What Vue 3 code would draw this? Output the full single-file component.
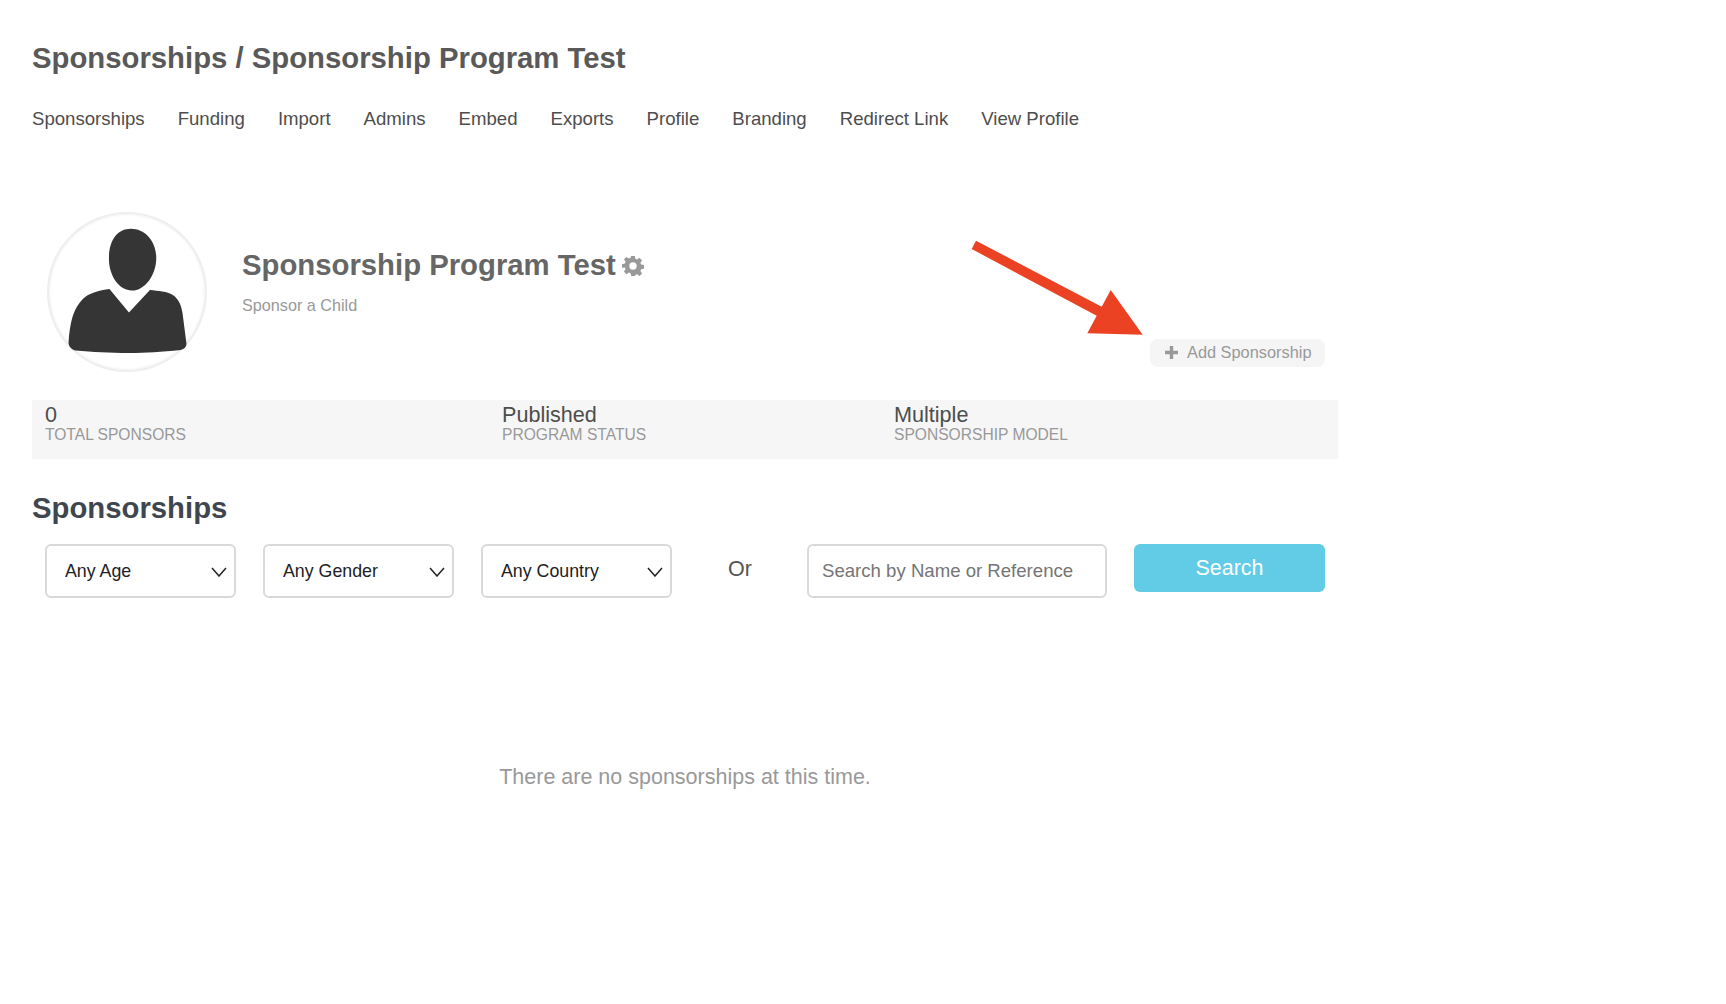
<script setup>
const tabs = ['Sponsorships', 'Funding', 'Import', 'Admins', 'Embed', 'Exports', 'Profile', 'Branding', 'Redirect Link', 'View Profile']

const stats = [
  { value: '0', label: 'TOTAL SPONSORS' },
  { value: 'Published', label: 'PROGRAM STATUS' },
  { value: 'Multiple', label: 'SPONSORSHIP MODEL' }
]

const filters = ['Any Age', 'Any Gender', 'Any Country']
</script>

<template>
  <main class="page">
    <h1 class="crumb">Sponsorships / Sponsorship Program Test</h1>

    <nav class="tabs">
      <a v-for="tab in tabs" :key="tab" href="#">{{ tab }}</a>
    </nav>

    <section class="profile">
      <div class="avatar">
        <svg viewBox="0 0 160 160" width="156" height="156">
          <path
            d="M84 15 C98 15 110 27 110 45 C110 63 98 78.500 85 78.500 C72 78.500 61 63 61.500 45 C61.500 27 70 15 84 15 Z"
            fill="#353535"
          />
          <path
            d="M62 77 L82 101 L103.500 78 C112 79 121 79.500 127 83 C133 87 136 94 137 102 L141 133 C141 136 139 138.500 135 139.500 C115 141.500 100 142.500 82 142.500 C62 142.500 45 141.500 27 140 C23 139 20.500 136 20 132.500 C20.500 122 22 113 24 106 C27 96 33 87 40 83 C47 79.500 55 78 62 77 Z"
            fill="#353535"
          />
        </svg>
      </div>

      <div class="profile-text">
        <h2>
          Sponsorship Program Test
          <svg class="gear" viewBox="0 0 24 24" width="22" height="22">
            <path
              fill="#999"
              fill-rule="evenodd"
              d="M10 1h4l.6 3.100 1.900.8 2.600-1.800 2.800 2.800-1.800 2.600.8 1.900 3.100.6v4l-3.100.6-.8 1.900 1.800 2.600-2.800 2.800-2.600-1.800-1.900.8L14 23h-4l-.6-3.100-1.900-.8-2.600 1.800-2.800-2.800 1.800-2.600-.8-1.900L0 14v-4l3.100-.6.8-1.900-1.800-2.600 2.800-2.800 2.600 1.800 1.900-.8L10 1Zm2 7a4 4 0 1 0 0 8 4 4 0 0 0 0-8Z"
            />
          </svg>
        </h2>
        <p>Sponsor a Child</p>
      </div>

      <button class="add-btn" type="button">
        <svg viewBox="0 0 13 13" width="13" height="13">
          <path d="M4.800 0h3.400v4.800H13v3.400H8.200V13H4.800V8.200H0V4.800h4.800Z" fill="#999" />
        </svg>
        <span>Add Sponsorship</span>
      </button>
    </section>

    <section class="stats">
      <div v-for="stat in stats" :key="stat.label">
        <div class="stat-value">{{ stat.value }}</div>
        <div class="stat-label">{{ stat.label }}</div>
      </div>
    </section>

    <h2 class="list-title">Sponsorships</h2>

    <form class="filters" @submit.prevent>
      <div v-for="filter in filters" :key="filter" class="select-wrap">
        <select>
          <option>{{ filter }}</option>
        </select>
        <svg class="chevron" viewBox="0 0 16 10" width="16" height="10">
          <path d="M1 1l7 8 7-8" fill="none" stroke="#222" stroke-width="1.500" />
        </svg>
      </div>
      <span class="or">Or</span>
      <input type="text" placeholder="Search by Name or Reference" />
      <button class="search-btn" type="submit">Search</button>
    </form>

    <p class="empty">There are no sponsorships at this time.</p>

    <svg class="arrow" viewBox="0 0 180 100" width="180" height="100">
      <path d="M11 5.700 L6.700 14 L131.700 80.700 L122.300 98.300 L177.700 99.700 L145.700 55 L136.700 71.700 Z" fill="#ec4224" />
    </svg>
  </main>
</template>

<style>
body {
  background: #fff;
}
</style>

<style scoped>
.page {
  position: relative;
  width: 1306px;
  margin-left: 32px;
  padding-top: 40px;
  height: 964px;
  font-family: "Liberation Sans", Arial, sans-serif;
}

.crumb {
  margin: 0;
  font-size: 29.300px;
  line-height: 36px;
  font-weight: 700;
  color: #595959;
}

.tabs {
  display: flex;
  gap: 33px;
  margin-top: 31px;
  height: 23px;
}

.tabs a {
  font-size: 18.600px;
  line-height: 24px;
  color: #4d4d4d;
  text-decoration: none;
}

.profile {
  display: flex;
  margin-top: 82px;
  padding-left: 15px;
  padding-right: 13px;
  height: 160px;
}

.avatar {
  width: 160px;
  height: 160px;
  box-sizing: border-box;
  border: 2px solid #eee;
  border-radius: 50%;
  box-shadow: inset 0 0 3px #e6e6e6;
  flex: none;
}

.avatar svg {
  display: block;
}

.profile-text {
  margin-left: 35px;
  padding-top: 35px;
}

.profile-text h2 {
  display: flex;
  align-items: center;
  gap: 6px;
  margin: 0;
  font-size: 29.300px;
  line-height: 36px;
  font-weight: 700;
  color: #666;
}

.gear {
  margin-top: 2px;
}

.profile-text p {
  margin: 12px 0 0;
  font-size: 16.200px;
  line-height: 20px;
  color: #999;
}

.add-btn {
  display: flex;
  align-items: center;
  gap: 9px;
  align-self: flex-end;
  margin-left: auto;
  margin-bottom: 5px;
  height: 28px;
  width: 175px;
  padding: 0 0 0 15px;
  border: none;
  border-radius: 8px;
  background: #f5f5f5;
  font-family: inherit;
  font-size: 16.350px;
  color: #999;
}

.add-btn svg {
  margin-top: -2px;
}

.add-btn span {
  margin-top: -2px;
}

.stats {
  display: grid;
  grid-template-columns: 457px 392px 1fr;
  margin-top: 28px;
  height: 59px;
  box-sizing: border-box;
  padding: 5px 0 0 13px;
  background: #f6f6f6;
}

.stat-value {
  font-size: 21.600px;
  line-height: 20px;
  color: #4d4d4d;
}

.stat-label {
  font-size: 15.600px;
  line-height: 20px;
  color: #999;
}

.list-title {
  margin: 31px 0 0;
  font-size: 29.300px;
  line-height: 36px;
  font-weight: 700;
  color: #3f4650;
}

.filters {
  display: flex;
  align-items: flex-start;
  gap: 27px;
  margin-top: 18px;
  padding-left: 13px;
}

.select-wrap {
  position: relative;
  width: 191px;
  height: 54px;
}

select {
  appearance: none;
  display: block;
  width: 100%;
  height: 100%;
  padding: 0 0 0 18px;
  border: 2px solid #d9d9d9;
  border-radius: 6px;
  background: #fff;
  font-family: inherit;
  font-size: 17.800px;
  color: #222;
}

.chevron {
  position: absolute;
  top: 23px;
  right: 9px;
  pointer-events: none;
}

.or {
  width: 52px;
  margin-left: 29px;
  font-size: 21.500px;
  line-height: 50px;
  color: #555;
}

input {
  width: 300px;
  height: 54px;
  box-sizing: border-box;
  padding: 0 13px;
  border: 2px solid #d9d9d9;
  border-radius: 6px;
  font-family: inherit;
  font-size: 18.600px;
  outline: none;
}

input::placeholder {
  color: #757575;
  opacity: 1;
}

.search-btn {
  width: 191px;
  height: 48px;
  border: none;
  border-radius: 6px;
  background: #62cbe5;
  color: #fff;
  font-family: inherit;
  font-size: 21.500px;
}

.empty {
  margin: 164px 0 0;
  text-align: center;
  font-size: 21.500px;
  line-height: 30px;
  color: #999;
}

.arrow {
  position: absolute;
  left: 933px;
  top: 235px;
}
</style>
